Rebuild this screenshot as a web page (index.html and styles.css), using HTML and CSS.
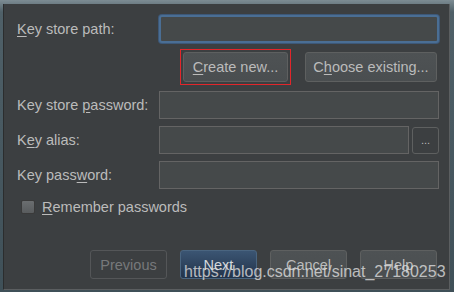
FILE: index.html
```html
<!DOCTYPE html>
<html>
<head>
    <title>Generate Signed APK</title>
    <meta charset="UTF-8">
    <meta name="viewport" content="width=device-width, initial-scale=1.0">
    <link rel="stylesheet" href="styles.css">
</head>
<body>
    <div class="window">
        <div class="row">
            <label class="label"><u>K</u>ey store path:</label>
            <div class="field field-focused"></div>
        </div>

        <div class="actions">
            <span class="marker">
                <button class="button"><u>C</u>reate new...</button>
            </span>
            <button class="button button-wide">C<u>h</u>oose existing...</button>
        </div>

        <div class="row">
            <label class="label">Key store <u>p</u>assword:</label>
            <div class="field"></div>
        </div>

        <div class="row row-gap">
            <label class="label">K<u>e</u>y alias:</label>
            <div class="field"></div>
            <button class="browse">...</button>
        </div>

        <div class="row row-gap">
            <label class="label">Key pass<u>w</u>ord:</label>
            <div class="field"></div>
        </div>

        <div class="check-row">
            <span class="checkbox"></span>
            <label class="label"><u>R</u>emember passwords</label>
        </div>

        <footer class="footer">
            <button class="button button-disabled">Previous</button>
            <button class="button button-default">Next</button>
            <button class="button">Cancel</button>
            <button class="button">Help</button>
        </footer>

        <div class="watermark">https://blog.csdn.net/sinat_27180253</div>
    </div>
</body>
</html>
```

FILE: styles.css
```css
/* Dark IDE dialog */
:root {
    --bg: #3c3f41;
    --field-bg: #45494a;
    --field-border: #646464;
    --text: #bbbbbb;
    --btn-border: #5e6060;
}

* { margin: 0; padding: 0; box-sizing: border-box; }

body {
    width: 454px;
    height: 292px;
    overflow: hidden;
    background: linear-gradient(#7d8c93, #4f6068 12px, #3f5058);
    font-family: "Liberation Sans", Arial, sans-serif;
    font-size: 14.5px;
    color: var(--text);
}

.window {
    position: relative;
    margin: 4px 0 0 3px;
    width: 447px;
    height: 286px;
    background: var(--bg);
    border-left: 1px solid #2b2d2e;
    border-right: 1px solid #5b5e60;
    border-bottom: 1px solid #5b5e60;
    padding: 11px 10px 0 13px;
    display: flex;
    flex-direction: column;
}

u {
    text-decoration: underline;
    text-underline-offset: 2px;
}

.row {
    display: flex;
    align-items: center;
    height: 28px;
}

.row-gap { margin-top: 7px; }

.label {
    width: 142px;
    flex-shrink: 0;
    white-space: nowrap;
}

.field {
    flex: 1;
    height: 28px;
    background: var(--field-bg);
    border: 1px solid var(--field-border);
}

.field-focused {
    border: 2px solid #4a6e94;
    border-radius: 3px;
    box-shadow: 0 0 0 1px #3d5878;
}

.browse {
    width: 27px;
    height: 27px;
    margin-left: 3px;
    background: var(--bg);
    border: 1px solid var(--btn-border);
    border-radius: 3px;
    color: var(--text);
    font-family: inherit;
    font-size: 11px;
    line-height: 18px;
}

.actions {
    display: flex;
    justify-content: flex-end;
    align-items: center;
    gap: 14px;
    margin: 6px 2px 6px 0;
}

.marker {
    display: flex;
    padding: 2px;
    border: 1px solid #e2262b;
}

.button {
    height: 30px;
    width: 105px;
    background: linear-gradient(#4e5254, #4a4e50);
    border: 1px solid var(--btn-border);
    border-radius: 3px;
    color: var(--text);
    font-family: inherit;
    font-size: 14.5px;
}

.button-wide { width: 132px; }

.check-row {
    display: flex;
    align-items: center;
    gap: 7px;
    margin-top: 10px;
    padding-left: 4px;
    height: 16px;
}

.checkbox {
    width: 14px;
    height: 14px;
    border: 1px solid #3a3a3a;
    border-radius: 2px;
    background: linear-gradient(#6b6e70, #595c5e);
}

.footer {
    margin-top: auto;
    margin-right: 2px;
    margin-bottom: 10px;
    display: flex;
    justify-content: flex-end;
    gap: 13px;
}

.footer .button {
    width: 77px;
    height: 29px;
}

.button-disabled {
    background: var(--bg);
    border-color: #545658;
    color: #77797b;
}

.button-default {
    background: linear-gradient(#3b5573, #22334a);
    border-color: #4a6580;
    color: #d4d8dc;
}

.watermark {
    position: absolute;
    left: 180px;
    top: 260px;
    font-family: "Liberation Sans", Arial, sans-serif;
    font-size: 16px;
    line-height: 16px;
    color: rgba(225, 225, 225, 0.78);
    white-space: nowrap;
}
```
